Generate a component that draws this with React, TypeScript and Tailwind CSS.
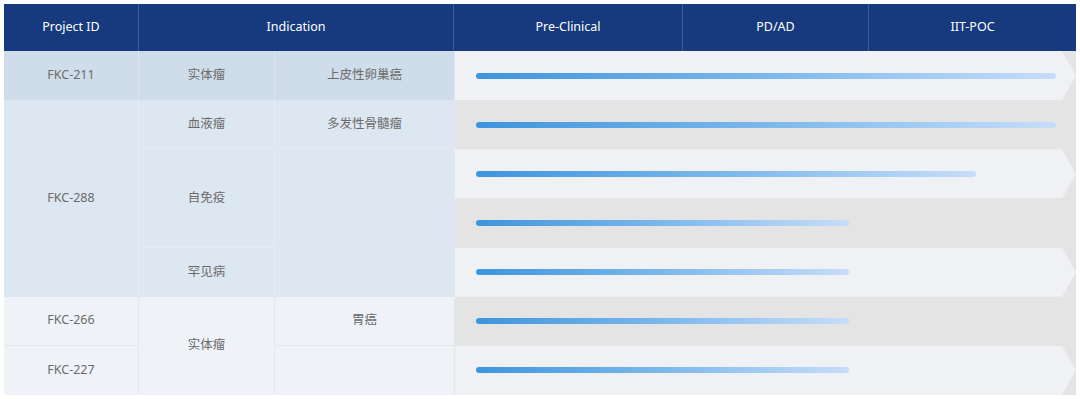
const stages = [
  { name: "Pre-Clinical", w: "w-[229px]" },
  { name: "PD/AD", w: "w-[186px]" },
  { name: "IIT-POC", w: "w-[207px]" },
];

// bar widths measured from bar start
const bars = [
  { w: 580, light: true },
  { w: 580, light: false },
  { w: 500, light: true },
  { w: 373, light: false },
  { w: 373, light: true },
  { w: 373, light: false },
  { w: 373, light: true },
];

function Cell({
  className,
  children,
}: {
  className: string;
  children?: React.ReactNode;
}) {
  return (
    <div
      className={
        "flex items-center justify-center text-[12.5px] text-[#6b6b6b] " +
        className
      }
    >
      {children}
    </div>
  );
}

export default function App() {
  return (
    <div className="min-h-screen bg-white p-1 font-['Noto_Sans','Noto_Sans_CJK_SC',sans-serif]">
      <div className="grid h-[391px] grid-cols-[135px_136px_179px_622px] grid-rows-[47px_repeat(7,minmax(0,1fr))]">
        {/* header */}
        <div className="col-start-1 row-start-1 flex items-center justify-center border-r border-[#3b5b96] bg-[#163a7d] text-[12.5px] text-white">
          Project ID
        </div>
        <div className="col-span-2 col-start-2 row-start-1 flex items-center justify-center border-r border-[#3b5b96] bg-[#163a7d] text-[12.5px] text-white">
          Indication
        </div>
        <div className="col-start-4 row-start-1 flex bg-[#163a7d]">
          {stages.map((s, i) => (
            <div
              key={s.name}
              className={
                s.w +
                " flex items-center justify-center text-[12.5px] text-white " +
                (i < 2 ? "border-r border-[#3b5b96]" : "")
              }
            >
              {s.name}
            </div>
          ))}
        </div>

        {/* FKC-211 */}
        <Cell className="col-start-1 row-start-2 border-r border-[#dbe4ee] bg-[#cfdcea]">FKC-211</Cell>
        <Cell className="col-start-2 row-start-2 border-r border-[#dbe4ee] bg-[#cfdcea]">实体瘤</Cell>
        <Cell className="col-start-3 row-start-2 bg-[#cfdcea]">上皮性卵巢癌</Cell>

        {/* FKC-288 */}
        <Cell className="col-start-1 row-span-4 row-start-3 border-r border-[#e4ebf3] bg-[#dde7f1]">FKC-288</Cell>
        <Cell className="col-start-2 row-start-3 border-r border-b border-[#e4ebf3] bg-[#dde7f1]">血液瘤</Cell>
        <Cell className="col-start-3 row-start-3 border-b border-[#e4ebf3] bg-[#dde7f1]">多发性骨髓瘤</Cell>
        <Cell className="col-start-2 row-span-2 row-start-4 border-r border-b border-[#e4ebf3] bg-[#dde7f1]">自免疫</Cell>
        <Cell className="col-start-2 row-start-6 border-r border-[#e4ebf3] bg-[#dde7f1]">罕见病</Cell>
        <Cell className="col-start-3 row-span-3 row-start-4 bg-[#dde7f1]" />

        {/* FKC-266 / FKC-227 */}
        <Cell className="col-start-1 row-start-7 border-r border-b border-[#e3e8ef] bg-[#eff3f8]">FKC-266</Cell>
        <Cell className="col-start-1 row-start-8 border-r border-[#e3e8ef] bg-[#eff3f8]">FKC-227</Cell>
        <Cell className="col-start-2 row-span-2 row-start-7 border-r border-[#e3e8ef] bg-[#eff3f8]">实体瘤</Cell>
        <Cell className="col-start-3 row-start-7 border-b border-[#e3e8ef] bg-[#eff3f8]">胃癌</Cell>
        <Cell className="col-start-3 row-start-8 bg-[#eff3f8]" />

        {/* pipeline */}
        <div className="col-start-4 row-span-7 row-start-2 flex flex-col border-l border-[#e3e8ef] bg-[#e4e4e4]">
          {bars.map((b, i) => (
            <div
              key={i}
              className={
                "flex flex-1 items-center pl-[21px] " +
                (b.light
                  ? "bg-[#f0f1f4] [clip-path:polygon(0_0,calc(100%_-_14px)_0,100%_50%,calc(100%_-_14px)_100%,0_100%)]"
                  : "")
              }
            >
              <div
                className="h-[6px] rounded-full bg-gradient-to-r from-[#3d95dd] via-[#7ab8ec] to-[#c6ddf9]"
                style={{ width: b.w }}
              />
            </div>
          ))}
        </div>
      </div>
    </div>
  );
}
